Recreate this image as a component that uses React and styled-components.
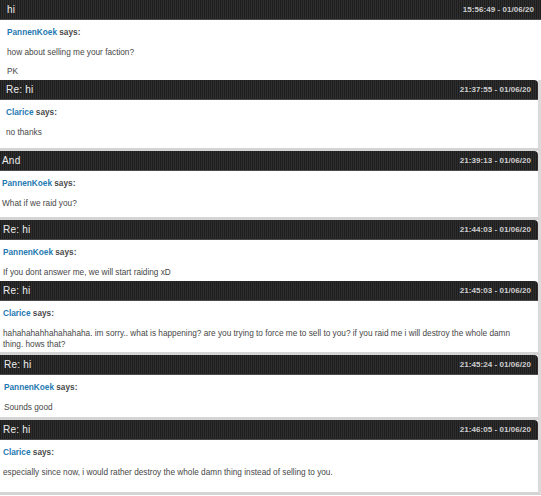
import React from "react";
import styled, { createGlobalStyle } from "styled-components";

const Global = createGlobalStyle`
  html, body { margin: 0; padding: 0; background: #fff; }
  body { font-family: "Liberation Sans", Arial, sans-serif; overflow: hidden; }
`;

const Thread = styled.div`
  width: 541px;
  height: 496px;
  display: flex;
  flex-direction: column;
  overflow: hidden;
`;

const Card = styled.section`
  display: flex;
  flex-direction: column;
  background: #fff;
  border-right: ${(p) => (p.$side ? "3px solid #dadada" : "none")};
  border-bottom: ${(p) => (p.$foot ? "3px solid #d4d4d4" : "none")};
`;

const Header = styled.header`
  height: 20px;
  box-sizing: border-box;
  display: flex;
  align-items: center;
  justify-content: space-between;
  padding: 0 7px 0 ${(p) => p.$pad}px;
  background: repeating-linear-gradient(
    90deg,
    #1e1e1e 0px,
    #1e1e1e 1px,
    #2e2e2e 1px,
    #2e2e2e 2px
  );
  border-bottom: 1px solid #4a4a4a;
  border-top-right-radius: ${(p) => (p.$side ? "4px" : "0")};
`;

const Title = styled.span`
  font-size: 10px;
  color: #eeeeee;
  letter-spacing: 0.2px;
  line-height: 1;
`;

const Stamp = styled.span`
  font-size: 8px;
  font-weight: bold;
  color: #cfcfcf;
  letter-spacing: 0.05px;
  line-height: 1;
`;

const Body = styled.div`
  padding: 7px 8px ${(p) => p.$bottom}px ${(p) => p.$pad}px;
  font-size: 8.25px;
  line-height: 11px;
  color: #474747;
`;

const Says = styled.div`
  font-weight: bold;
  color: #4a4a4a;
  margin-bottom: 9px;
`;

const Name = styled.span`
  color: #2479b0;
`;

const Para = styled.p`
  margin: 0;
  & + & { margin-top: 8px; }
`;

const posts = [
  { title: "hi", time: "15:56:49 - 01/06/20", name: "PannenKoek", pad: 7, bottom: 3, side: false, foot: false,
    text: ["how about selling me your faction?", "PK"] },
  { title: "Re: hi", time: "21:37:55 - 01/06/20", name: "Clarice", pad: 6, bottom: 10, side: true, foot: true,
    text: ["no thanks"] },
  { title: "And", time: "21:39:13 - 01/06/20", name: "PannenKoek", pad: 2, bottom: 8, side: true, foot: true,
    text: ["What if we raid you?"] },
  { title: "Re: hi", time: "21:44:03 - 01/06/20", name: "PannenKoek", pad: 3, bottom: 3, side: true, foot: false,
    text: ["If you dont answer me, we will start raiding xD"] },
  { title: "Re: hi", time: "21:45:03 - 01/06/20", name: "Clarice", pad: 3, bottom: 2, side: true, foot: true,
    text: ["hahahahahhahahahaha. im sorry.. what is happening? are you trying to force me to sell to you? if you raid me i will destroy the whole damn thing. hows that?"] },
  { title: "Re: hi", time: "21:45:24 - 01/06/20", name: "PannenKoek", pad: 4, bottom: 4, side: true, foot: true,
    text: ["Sounds good"] },
  { title: "Re: hi", time: "21:46:05 - 01/06/20", name: "Clarice", pad: 3, bottom: 14, side: true, foot: true,
    text: ["especially since now, i would rather destroy the whole damn thing instead of selling to you."] },
];

export default function App() {
  return (
    <>
      <Global />
      <Thread>
        {posts.map((p, i) => (
          <Card key={i} $side={p.side} $foot={p.foot}>
            <Header $pad={p.pad} $side={p.side}>
              <Title>{p.title}</Title>
              <Stamp>{p.time}</Stamp>
            </Header>
            <Body $pad={p.pad} $bottom={p.bottom}>
              <Says>
                <Name>{p.name}</Name> says:
              </Says>
              {p.text.map((t, j) => (
                <Para key={j}>{t}</Para>
              ))}
            </Body>
          </Card>
        ))}
      </Thread>
    </>
  );
}
